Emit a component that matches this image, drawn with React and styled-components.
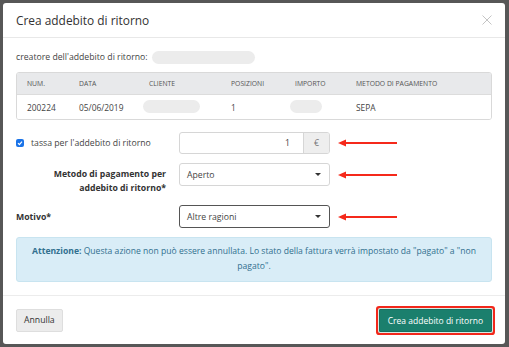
import styled, { createGlobalStyle } from "styled-components";

const Global = createGlobalStyle`
  html, body {
    margin: 0;
    padding: 0;
    background: #575757;
  }
  body {
    font-family: "Open Sans", "Liberation Sans", sans-serif;
    color: #333;
  }
`;

const Backdrop = styled.div`
  width: 509px;
  height: 347px;
  box-sizing: border-box;
  padding: 3px 4px 3px 3px;
  background: #575757;
`;

const Modal = styled.div`
  background: #fff;
  border-radius: 3px;
  height: 341px;
  display: flex;
  flex-direction: column;
`;

const Header = styled.div`
  height: 35px;
  box-sizing: border-box;
  border-bottom: 1px solid #e8e8e8;
  display: flex;
  align-items: center;
  justify-content: space-between;
  padding: 0 13px 0 13px;
`;

const Title = styled.h4`
  margin: 0;
  font-size: 11.9px;
  font-weight: 400;
  color: #333;
`;

const Close = styled.button`
  border: 0;
  background: none;
  padding: 0;
  width: 10px;
  height: 10px;
  display: flex;
  align-items: center;
  justify-content: center;
`;

const Body = styled.div`
  padding: 12px 13px 13px;
  display: flex;
  flex-direction: column;
  border-bottom: 1px solid #ececec;
`;

const CreatorRow = styled.div`
  height: 14px;
  display: flex;
  align-items: center;
  gap: 4px;
  font-size: 8.7px;
  color: #444;
`;

const Pill = styled.span`
  display: inline-block;
  width: ${(p) => p.w}px;
  height: 13px;
  border-radius: 7px;
  background: #ececec;
  margin-left: ${(p) => p.offset || 0}px;
`;

const Table = styled.div`
  margin-top: 8px;
  border: 1px solid #d9d9d9;
  border-radius: 3px;
  overflow: hidden;
`;

const TRow = styled.div`
  display: grid;
  grid-template-columns: 52px 70px 82px 64px 61px 1fr;
  align-items: center;
  padding-left: 10px;
  height: ${(p) => (p.head ? 21 : 24)}px;
  background: ${(p) => (p.head ? "#e8e9eb" : "#fff")};
  border-bottom: ${(p) => (p.head ? "1px solid #dcdcdc" : "none")};
  font-size: ${(p) => (p.head ? "6.8px" : "8.4px")};
  color: ${(p) => (p.head ? "#555" : "#444")};
  text-transform: ${(p) => (p.head ? "uppercase" : "none")};
`;

const Form = styled.div`
  margin-top: 12px;
  display: flex;
  flex-direction: column;
  gap: 9px;
`;

const FormRow = styled.div`
  display: grid;
  grid-template-columns: 150px 151px 59px;
  column-gap: 13px;
  align-items: ${(p) => (p.top ? "start" : "center")};
  min-height: ${(p) => p.h || 22}px;
`;

const Label = styled.label`
  font-size: 8.7px;
  line-height: 14px;
  font-weight: ${(p) => (p.bold ? 700 : 400)};
  color: ${(p) => (p.bold ? "#333" : "#444")};
  text-align: ${(p) => (p.right ? "right" : "left")};
  padding-top: ${(p) => p.pt || 0}px;
  display: flex;
  align-items: center;
  justify-content: ${(p) => (p.right ? "flex-end" : "flex-start")};
  gap: 7px;
`;

const Check = styled.span`
  width: 8px;
  height: 8px;
  border-radius: 2px;
  background: #1a73e8;
  display: inline-flex;
  align-items: center;
  justify-content: center;
  flex-shrink: 0;
`;

const InputGroup = styled.div`
  display: flex;
  height: 22px;
  border: 1px solid #d6d6d6;
  border-radius: 3px;
  box-sizing: border-box;
  overflow: hidden;
`;

const Input = styled.div`
  flex: 1;
  display: flex;
  align-items: center;
  justify-content: flex-end;
  padding-right: 13px;
  font-size: 8.7px;
  color: #444;
`;

const Addon = styled.div`
  width: 25px;
  background: #eeeeee;
  border-left: 1px solid #d6d6d6;
  display: flex;
  align-items: center;
  justify-content: center;
  font-size: 8.7px;
  color: #777;
`;

const Select = styled.div`
  height: 23px;
  box-sizing: border-box;
  border: 1px solid ${(p) => (p.focus ? "#555" : "#d6d6d6")};
  border-radius: 3px;
  display: flex;
  align-items: center;
  justify-content: space-between;
  padding: 0 8px 0 7px;
  font-size: 8.7px;
  color: #444;
`;

const Caret = styled.span`
  width: 0;
  height: 0;
  border-left: 3px solid transparent;
  border-right: 3px solid transparent;
  border-top: 3px solid #333;
`;

const Arrow = styled.svg`
  display: block;
  margin-left: -5px;
  margin-top: ${(p) => p.mt || 0}px;
`;

const Alert = styled.div`
  margin-top: 9px;
  height: 45px;
  box-sizing: border-box;
  background: #d9edf7;
  border: 1px solid #c8e4f0;
  border-radius: 3px;
  color: #31708f;
  font-size: 8.6px;
  line-height: 15px;
  text-align: center;
  padding: 6px 10px 0;

  b {
    font-weight: 700;
  }
`;

const Footer = styled.div`
  flex: 1;
  display: flex;
  align-items: center;
  justify-content: space-between;
  padding: 0 13px 0 13px;
`;

const Button = styled.button`
  font-family: inherit;
  font-size: ${(p) => (p.primary ? 8.5 : 8.7)}px;
  height: 23px;
  border-radius: ${(p) => (p.primary ? 1 : 2)}px;
  padding: 0 ${(p) => (p.primary ? 8 : 7)}px;
  cursor: pointer;
  border: 1px solid ${(p) => (p.primary ? "#17705f" : "#dedede")};
  background: ${(p) => (p.primary ? "#1b7f6d" : "#ececec")};
  color: ${(p) => (p.primary ? "#fff" : "#333")};
  box-shadow: ${(p) =>
    p.primary ? "0 0 0 1px #d6ece6, 0 0 0 3px #f2281b" : "none"};
  margin-right: ${(p) => (p.primary ? 0 : 0)}px;
`;

const RedArrow = ({ mt }) => (
  <Arrow width="59" height="8" viewBox="0 0 59 8" mt={mt}>
    <line x1="6" y1="4" x2="59" y2="4" stroke="#f5291b" strokeWidth="1.8" />
    <polygon points="0,4 8,0.5 8,7.5" fill="#f5291b" />
  </Arrow>
);

const columns = ["Num.", "Data", "Cliente", "Posizioni", "Importo", "Metodo di pagamento"];

export default function App() {
  return (
    <>
      <Global />
      <Backdrop>
        <Modal>
          <Header>
            <Title>Crea addebito di ritorno</Title>
            <Close aria-label="chiudi">
              <svg width="10" height="10" viewBox="0 0 10 10">
                <path d="M0.5 0.5 L9.5 9.5 M9.5 0.5 L0.5 9.5" stroke="#c4c4c4" strokeWidth="1" />
              </svg>
            </Close>
          </Header>
          <Body>
            <CreatorRow>
              creatore dell'addebito di ritorno: <Pill w={103} />
            </CreatorRow>
            <Table>
              <TRow head>
                {columns.map((c) => (
                  <span key={c}>{c}</span>
                ))}
              </TRow>
              <TRow>
                <span>200224</span>
                <span>05/06/2019</span>
                <span>
                  <Pill w={57} offset={-6} />
                </span>
                <span>1</span>
                <span>
                  <Pill w={32} offset={-5} />
                </span>
                <span>SEPA</span>
              </TRow>
            </Table>
            <Form>
              <FormRow>
                <Label>
                  <Check>
                    <svg width="6" height="6" viewBox="0 0 6 6">
                      <path d="M1 3.2 L2.4 4.6 L5 1.6" stroke="#fff" strokeWidth="1.2" fill="none" />
                    </svg>
                  </Check>
                  tassa per l'addebito di ritorno
                </Label>
                <InputGroup>
                  <Input>1</Input>
                  <Addon>€</Addon>
                </InputGroup>
                <RedArrow />
              </FormRow>
              <FormRow top h={33}>
                <Label bold right pt={4}>
                  Metodo di pagamento per
                  <br />
                  addebito di ritorno*
                </Label>
                <Select>
                  Aperto
                  <Caret />
                </Select>
                <RedArrow mt={8} />
              </FormRow>
              <FormRow h={23}>
                <Label bold>Motivo*</Label>
                <Select focus>
                  Altre ragioni
                  <Caret />
                </Select>
                <RedArrow />
              </FormRow>
            </Form>
            <Alert>
              <b>Attenzione:</b> Questa azione non può essere annullata. Lo stato della
              fattura verrà impostato da "pagato" a "non pagato".
            </Alert>
          </Body>
          <Footer>
            <Button>Annulla</Button>
            <Button primary>Crea addebito di ritorno</Button>
          </Footer>
        </Modal>
      </Backdrop>
    </>
  );
}
